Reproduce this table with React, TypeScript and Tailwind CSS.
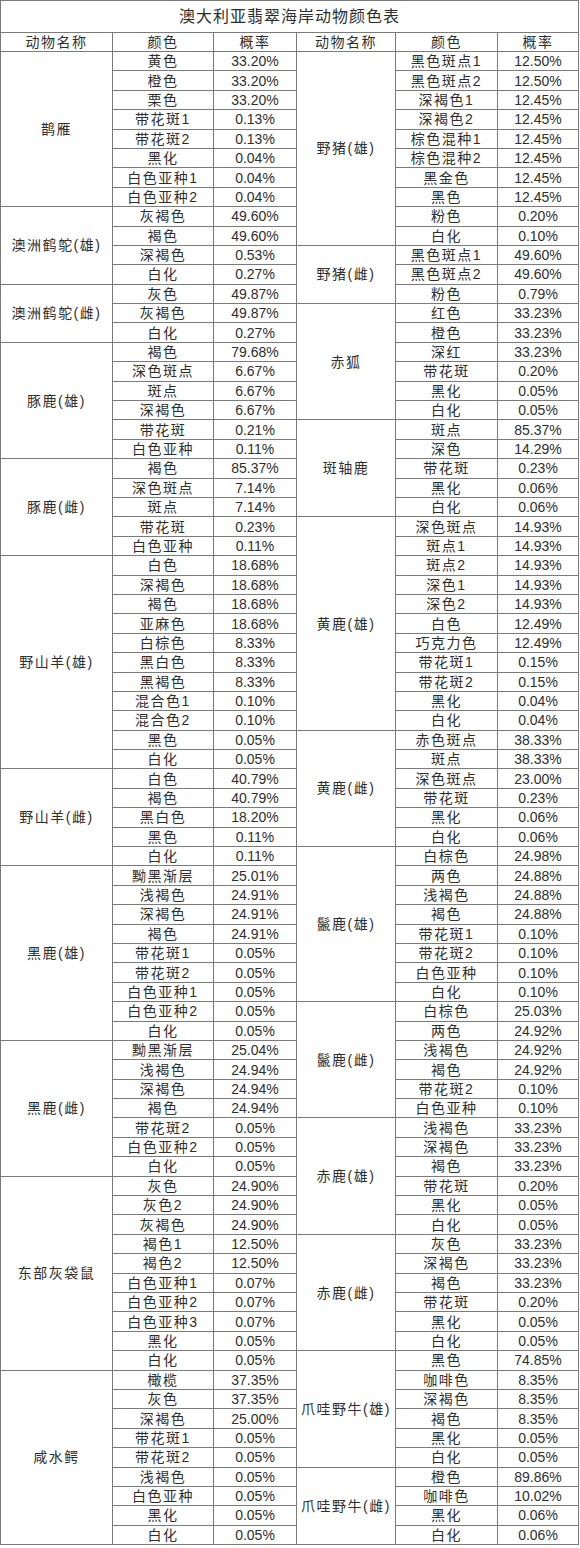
type Row = [string, string];
type Group = { name: string; rows: Row[] };

const leftGroups: Group[] = [
  {
    name: "鹊雁",
    rows: [
      ["黄色", "33.20%"],
      ["橙色", "33.20%"],
      ["栗色", "33.20%"],
      ["带花斑1", "0.13%"],
      ["带花斑2", "0.13%"],
      ["黑化", "0.04%"],
      ["白色亚种1", "0.04%"],
      ["白色亚种2", "0.04%"],
    ],
  },
  {
    name: "澳洲鹤鸵(雄)",
    rows: [
      ["灰褐色", "49.60%"],
      ["褐色", "49.60%"],
      ["深褐色", "0.53%"],
      ["白化", "0.27%"],
    ],
  },
  {
    name: "澳洲鹤鸵(雌)",
    rows: [
      ["灰色", "49.87%"],
      ["灰褐色", "49.87%"],
      ["白化", "0.27%"],
    ],
  },
  {
    name: "豚鹿(雄)",
    rows: [
      ["褐色", "79.68%"],
      ["深色斑点", "6.67%"],
      ["斑点", "6.67%"],
      ["深褐色", "6.67%"],
      ["带花斑", "0.21%"],
      ["白色亚种", "0.11%"],
    ],
  },
  {
    name: "豚鹿(雌)",
    rows: [
      ["褐色", "85.37%"],
      ["深色斑点", "7.14%"],
      ["斑点", "7.14%"],
      ["带花斑", "0.23%"],
      ["白色亚种", "0.11%"],
    ],
  },
  {
    name: "野山羊(雄)",
    rows: [
      ["白色", "18.68%"],
      ["深褐色", "18.68%"],
      ["褐色", "18.68%"],
      ["亚麻色", "18.68%"],
      ["白棕色", "8.33%"],
      ["黑白色", "8.33%"],
      ["黑褐色", "8.33%"],
      ["混合色1", "0.10%"],
      ["混合色2", "0.10%"],
      ["黑色", "0.05%"],
      ["白化", "0.05%"],
    ],
  },
  {
    name: "野山羊(雌)",
    rows: [
      ["白色", "40.79%"],
      ["褐色", "40.79%"],
      ["黑白色", "18.20%"],
      ["黑色", "0.11%"],
      ["白化", "0.11%"],
    ],
  },
  {
    name: "黑鹿(雄)",
    rows: [
      ["黝黑渐层", "25.01%"],
      ["浅褐色", "24.91%"],
      ["深褐色", "24.91%"],
      ["褐色", "24.91%"],
      ["带花斑1", "0.05%"],
      ["带花斑2", "0.05%"],
      ["白色亚种1", "0.05%"],
      ["白色亚种2", "0.05%"],
      ["白化", "0.05%"],
    ],
  },
  {
    name: "黑鹿(雌)",
    rows: [
      ["黝黑渐层", "25.04%"],
      ["浅褐色", "24.94%"],
      ["深褐色", "24.94%"],
      ["褐色", "24.94%"],
      ["带花斑2", "0.05%"],
      ["白色亚种2", "0.05%"],
      ["白化", "0.05%"],
    ],
  },
  {
    name: "东部灰袋鼠",
    rows: [
      ["灰色", "24.90%"],
      ["灰色2", "24.90%"],
      ["灰褐色", "24.90%"],
      ["褐色1", "12.50%"],
      ["褐色2", "12.50%"],
      ["白色亚种1", "0.07%"],
      ["白色亚种2", "0.07%"],
      ["白色亚种3", "0.07%"],
      ["黑化", "0.05%"],
      ["白化", "0.05%"],
    ],
  },
  {
    name: "咸水鳄",
    rows: [
      ["橄榄", "37.35%"],
      ["灰色", "37.35%"],
      ["深褐色", "25.00%"],
      ["带花斑1", "0.05%"],
      ["带花斑2", "0.05%"],
      ["浅褐色", "0.05%"],
      ["白色亚种", "0.05%"],
      ["黑化", "0.05%"],
      ["白化", "0.05%"],
    ],
  },
];

const rightGroups: Group[] = [
  {
    name: "野猪(雄)",
    rows: [
      ["黑色斑点1", "12.50%"],
      ["黑色斑点2", "12.50%"],
      ["深褐色1", "12.45%"],
      ["深褐色2", "12.45%"],
      ["棕色混种1", "12.45%"],
      ["棕色混种2", "12.45%"],
      ["黑金色", "12.45%"],
      ["黑色", "12.45%"],
      ["粉色", "0.20%"],
      ["白化", "0.10%"],
    ],
  },
  {
    name: "野猪(雌)",
    rows: [
      ["黑色斑点1", "49.60%"],
      ["黑色斑点2", "49.60%"],
      ["粉色", "0.79%"],
    ],
  },
  {
    name: "赤狐",
    rows: [
      ["红色", "33.23%"],
      ["橙色", "33.23%"],
      ["深红", "33.23%"],
      ["带花斑", "0.20%"],
      ["黑化", "0.05%"],
      ["白化", "0.05%"],
    ],
  },
  {
    name: "斑轴鹿",
    rows: [
      ["斑点", "85.37%"],
      ["深色", "14.29%"],
      ["带花斑", "0.23%"],
      ["黑化", "0.06%"],
      ["白化", "0.06%"],
    ],
  },
  {
    name: "黄鹿(雄)",
    rows: [
      ["深色斑点", "14.93%"],
      ["斑点1", "14.93%"],
      ["斑点2", "14.93%"],
      ["深色1", "14.93%"],
      ["深色2", "14.93%"],
      ["白色", "12.49%"],
      ["巧克力色", "12.49%"],
      ["带花斑1", "0.15%"],
      ["带花斑2", "0.15%"],
      ["黑化", "0.04%"],
      ["白化", "0.04%"],
    ],
  },
  {
    name: "黄鹿(雌)",
    rows: [
      ["赤色斑点", "38.33%"],
      ["斑点", "38.33%"],
      ["深色斑点", "23.00%"],
      ["带花斑", "0.23%"],
      ["黑化", "0.06%"],
      ["白化", "0.06%"],
    ],
  },
  {
    name: "鬣鹿(雄)",
    rows: [
      ["白棕色", "24.98%"],
      ["两色", "24.88%"],
      ["浅褐色", "24.88%"],
      ["褐色", "24.88%"],
      ["带花斑1", "0.10%"],
      ["带花斑2", "0.10%"],
      ["白色亚种", "0.10%"],
      ["白化", "0.10%"],
    ],
  },
  {
    name: "鬣鹿(雌)",
    rows: [
      ["白棕色", "25.03%"],
      ["两色", "24.92%"],
      ["浅褐色", "24.92%"],
      ["褐色", "24.92%"],
      ["带花斑2", "0.10%"],
      ["白色亚种", "0.10%"],
    ],
  },
  {
    name: "赤鹿(雄)",
    rows: [
      ["浅褐色", "33.23%"],
      ["深褐色", "33.23%"],
      ["褐色", "33.23%"],
      ["带花斑", "0.20%"],
      ["黑化", "0.05%"],
      ["白化", "0.05%"],
    ],
  },
  {
    name: "赤鹿(雌)",
    rows: [
      ["灰色", "33.23%"],
      ["深褐色", "33.23%"],
      ["褐色", "33.23%"],
      ["带花斑", "0.20%"],
      ["黑化", "0.05%"],
      ["白化", "0.05%"],
    ],
  },
  {
    name: "爪哇野牛(雄)",
    rows: [
      ["黑色", "74.85%"],
      ["咖啡色", "8.35%"],
      ["深褐色", "8.35%"],
      ["褐色", "8.35%"],
      ["黑化", "0.05%"],
      ["白化", "0.05%"],
    ],
  },
  {
    name: "爪哇野牛(雌)",
    rows: [
      ["橙色", "89.86%"],
      ["咖啡色", "10.02%"],
      ["黑化", "0.06%"],
      ["白化", "0.06%"],
    ],
  },
];

const cell = "flex items-center justify-center border-r border-b border-[#7b7b7b]";
const cn = "tracking-[1.5px]";

function Half({
  groups,
  nameW,
  colorW,
  probW,
}: {
  groups: Group[];
  nameW: string;
  colorW: string;
  probW: string;
}) {
  return (
    <div className="flex flex-col">
      {groups.map((g) => (
        <div key={g.name} className="flex">
          <div className={`${cell} ${nameW} ${cn} whitespace-nowrap`}>{g.name}</div>
          <div className="flex flex-col">
            {g.rows.map(([color, prob], i) => (
              <div key={i} className="flex h-[19.4px]">
                <div className={`${cell} ${colorW} ${cn}`}>{color}</div>
                <div className={`${cell} ${probW}`}>{prob}</div>
              </div>
            ))}
          </div>
        </div>
      ))}
    </div>
  );
}

export default function App() {
  return (
    <div className="bg-white min-h-screen font-['Liberation_Sans','Noto_Sans_CJK_SC',sans-serif] text-[14px] leading-none text-[#2e2e2e]">
      <div className="w-[579px] border-t border-l border-[#7b7b7b]">
        {/* Title */}
        <div className={`${cell} h-[32px] text-[16px] tracking-[1px]`}>澳大利亚翡翠海岸动物颜色表</div>

        {/* Header */}
        <div className="flex h-[19px]">
          <div className={`${cell} w-[112px] ${cn}`}>动物名称</div>
          <div className={`${cell} w-[101px] ${cn}`}>颜色</div>
          <div className={`${cell} w-[83px] ${cn}`}>概率</div>
          <div className={`${cell} w-[99px] ${cn}`}>动物名称</div>
          <div className={`${cell} w-[102px] ${cn}`}>颜色</div>
          <div className={`${cell} w-[81px] ${cn}`}>概率</div>
        </div>

        {/* Body */}
        <div className="flex">
          <Half groups={leftGroups} nameW="w-[112px]" colorW="w-[101px]" probW="w-[83px]" />
          <Half groups={rightGroups} nameW="w-[99px]" colorW="w-[102px]" probW="w-[81px]" />
        </div>
      </div>
    </div>
  );
}
